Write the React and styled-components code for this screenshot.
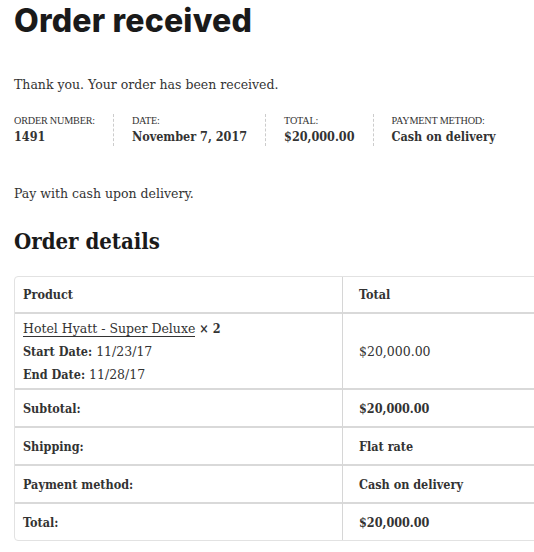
import styled, { createGlobalStyle } from "styled-components";

const condensed = `"DejaVu Serif Condensed", "DejaVu Serif", serif`;

const GlobalStyle = createGlobalStyle`
  html, body {
    margin: 0;
    padding: 0;
    background: #fff;
    overflow: hidden;
  }
  body {
    font-family: "DejaVu Serif", "Liberation Serif", serif;
    color: #333;
  }
  strong, th {
    font-family: ${condensed};
    font-weight: 700;
  }
`;

const Page = styled.main`
  width: 620px;
  padding: 0 0 0 14px;
`;

const Title = styled.h1`
  margin: 0;
  padding-top: 1px;
  font-family: Inter, "Open Sans", sans-serif;
  font-weight: 800;
  font-size: 32px;
  line-height: 40px;
  letter-spacing: 0.2px;
  color: #1a1a1a;
`;

const Text = styled.p`
  margin: ${(p) => p.$top || 0}px 0 0;
  font-size: 12.5px;
  line-height: 20px;
`;

const Overview = styled.ul`
  display: flex;
  list-style: none;
  margin: 19px 0 0;
  padding: 0;
`;

const OverviewItem = styled.li`
  padding: 0 18px;
  border-right: 1px dashed #ccc;
  &:first-child {
    padding-left: 0;
  }
  &:last-child {
    border-right: none;
  }
`;

const Label = styled.div`
  font-family: "Liberation Serif", serif;
  font-size: 10.2px;
  line-height: 14px;
  text-transform: uppercase;
  letter-spacing: -0.2px;
`;

const Value = styled.strong`
  display: block;
  font-size: 12.5px;
  line-height: 18px;
`;

const Heading = styled.h2`
  margin: 21px 0 0;
  font-family: ${condensed};
  font-size: 22px;
  line-height: 32px;
  font-weight: 700;
  color: #1a1a1a;
`;

const Table = styled.table`
  margin-top: 19px;
  width: 600px;
  border-collapse: separate;
  border-spacing: 0;
  border: 1px solid #e2e2e2;
  border-radius: 4px;
  font-size: 12.5px;
`;

const Cell = styled.td`
  padding: 0 16px;
  height: ${(p) => p.$h || 36}px;
  border-top: ${(p) => (p.$first ? "none" : "2px solid #d9d9d9")};
  vertical-align: middle;
  text-align: left;
  ${(p) => p.$bold && `font-family: ${condensed}; font-weight: 700;`}
  &:first-child {
    width: 303px;
    padding-left: 8px;
    border-right: 1px solid #d6d6d6;
  }
`;

const ProductLink = styled.a`
  color: #333;
  text-decoration: none;
  border-bottom: 1px solid #333;
`;

const Line = styled.div`
  line-height: 23px;
`;

const overview = [
  ["Order number:", "1491"],
  ["Date:", "November 7, 2017"],
  ["Total:", "$20,000.00"],
  ["Payment method:", "Cash on delivery"],
];

const totals = [
  ["Subtotal:", "$20,000.00"],
  ["Shipping:", "Flat rate"],
  ["Payment method:", "Cash on delivery"],
  ["Total:", "$20,000.00"],
];

export default function App() {
  return (
    <>
      <GlobalStyle />
      <Page>
        <Title>Order received</Title>
        <Text $top={34}>Thank you. Your order has been received.</Text>
        <Overview>
          {overview.map(([label, value]) => (
            <OverviewItem key={label}>
              <Label>{label}</Label>
              <Value>{value}</Value>
            </OverviewItem>
          ))}
        </Overview>
        <Text $top={38}>Pay with cash upon delivery.</Text>
        <Heading>Order details</Heading>
        <Table>
          <thead>
            <tr>
              <Cell as="th" $first $bold $h={35}>Product</Cell>
              <Cell as="th" $first $bold $h={35}>Total</Cell>
            </tr>
          </thead>
          <tbody>
            <tr>
              <Cell $h={74}>
                <Line>
                  <ProductLink href="#">Hotel Hyatt - Super Deluxe</ProductLink>{" "}
                  <strong>× 2</strong>
                </Line>
                <Line><strong>Start Date:</strong> 11/23/17</Line>
                <Line><strong>End Date:</strong> 11/28/17</Line>
              </Cell>
              <Cell $h={74}>$20,000.00</Cell>
            </tr>
            {totals.map(([label, value]) => (
              <tr key={label}>
                <Cell as="th" $bold>{label}</Cell>
                <Cell $bold>{value}</Cell>
              </tr>
            ))}
          </tbody>
        </Table>
      </Page>
    </>
  );
}
